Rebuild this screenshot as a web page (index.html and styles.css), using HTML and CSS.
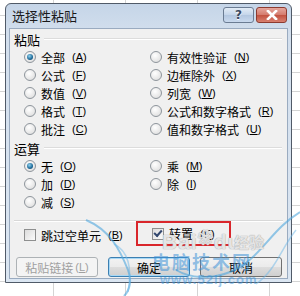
FILE: index.html
```html
<!DOCTYPE html>
<html lang="zh-CN">
<head>
    <meta charset="UTF-8">
    <title>选择性粘贴</title>
    <link rel="stylesheet" href="styles.css">
</head>
<body>
    <div class="dialog">
        <div class="titlebar">
            <span class="title">选择性粘贴</span>
            <div class="ctrls">
                <span class="cbtn help">?</span>
                <span class="cbtn close">
                    <svg width="12" height="10" viewBox="0 0 12 10"><path d="M2 1 L10 9 M10 1 L2 9" stroke="#fff" stroke-width="2.6" stroke-linecap="square"/></svg>
                </span>
            </div>
        </div>
        <div class="content">
            <div class="head"><span>粘贴</span></div>
            <div class="opts">
                <div class="opt"><i class="radio on"></i>全部<span class="key">(<u>A</u>)</span></div>
                <div class="opt"><i class="radio"></i>有效性验证<span class="key">(<u>N</u>)</span></div>
                <div class="opt"><i class="radio"></i>公式<span class="key">(<u>F</u>)</span></div>
                <div class="opt"><i class="radio"></i>边框除外<span class="key">(<u>X</u>)</span></div>
                <div class="opt"><i class="radio"></i>数值<span class="key">(<u>V</u>)</span></div>
                <div class="opt"><i class="radio"></i>列宽<span class="key">(<u>W</u>)</span></div>
                <div class="opt"><i class="radio"></i>格式<span class="key">(<u>T</u>)</span></div>
                <div class="opt"><i class="radio"></i>公式和数字格式<span class="key">(<u>R</u>)</span></div>
                <div class="opt"><i class="radio"></i>批注<span class="key">(<u>C</u>)</span></div>
                <div class="opt"><i class="radio"></i>值和数字格式<span class="key">(<u>U</u>)</span></div>
            </div>
            <div class="head"><span>运算</span></div>
            <div class="opts">
                <div class="opt"><i class="radio on"></i>无<span class="key">(<u>O</u>)</span></div>
                <div class="opt"><i class="radio"></i>乘<span class="key">(<u>M</u>)</span></div>
                <div class="opt"><i class="radio"></i>加<span class="key">(<u>D</u>)</span></div>
                <div class="opt"><i class="radio"></i>除<span class="key">(<u>I</u>)</span></div>
                <div class="opt"><i class="radio"></i>减<span class="key">(<u>S</u>)</span></div>
            </div>
            <div class="sep"></div>
            <div class="checks">
                <div class="opt chk"><i class="box"></i>跳过空单元<span class="key">(<u>B</u>)</span></div>
                <div class="opt chk mark"><i class="box on"></i>转置<span class="key">(<u>E</u>)</span></div>
            </div>
            <div class="buttons">
                <span class="button disabled">粘贴链接<span class="key">(<u>L</u>)</span></span>
                <span class="button default">确定</span>
                <span class="button">取消</span>
            </div>
        </div>
    </div>

    <div class="watermark">
        <svg class="swoosh" width="220" height="96" viewBox="0 0 220 96">
            <path d="M6 20 C30 30 40 50 48 70 C52 80 50 90 44 96" stroke="#4fa6de" stroke-width="2" fill="none" opacity="0.6"/>
            <path d="M34 44 C50 52 52 70 48 92" stroke="#6db8e8" stroke-width="1.5" fill="none" opacity="0.5"/>
            <path d="M220 12 C190 30 180 60 150 72 C130 80 110 78 96 70" stroke="#4fa6de" stroke-width="2" fill="none" opacity="0.6"/>
            <path d="M216 30 C200 50 196 70 176 84" stroke="#6db8e8" stroke-width="1.5" fill="none" opacity="0.5"/>
        </svg>
        <span class="wm-baidu">Bai<b>&#10048;</b>du</span>
        <span class="wm-jy">经验</span>
        <span class="wm-site">电脑技术网</span>
        <span class="wm-url">www.52lj.com</span>
    </div>
</body>
</html>
```

FILE: styles.css
```css
body {
    margin: 0;
    width: 300px;
    height: 296px;
    overflow: hidden;
    position: relative;
    font-family: "Noto Sans CJK SC", "DejaVu Sans", sans-serif;
    font-size: 12px;
    color: #000;
    background-color: #fff;
    background-image:
        linear-gradient(to right, #d4d4d4 1px, transparent 1px),
        linear-gradient(to bottom, #d4d4d4 1px, transparent 1px);
    background-size: 72px 19px;
    background-position: 53px 15px;
}

.dialog {
    margin: 3px 0 0 5px;
    width: 287px;
    height: 280px;
    box-sizing: border-box;
    border: 1px solid #505a68;
    border-radius: 6px 6px 0 0;
    background: linear-gradient(#c5d5e8, #d3dfed 30px, #dbe6f2);
    padding: 0 3px 3px 3px;
    display: flex;
    flex-direction: column;
}

.titlebar {
    height: 24px;
    flex: none;
    display: flex;
    justify-content: space-between;
    align-items: flex-start;
    padding: 0 1px 0 3px;
}

.title {
    font-size: 13px;
    line-height: 24px;
    color: #1a1a1a;
}

.ctrls {
    display: flex;
    gap: 2px;
    margin-top: 3px;
}

.cbtn {
    width: 31px;
    height: 16px;
    box-sizing: border-box;
    border: 1px solid #6b7c93;
    border-radius: 3px;
    display: flex;
    align-items: center;
    justify-content: center;
}

.help {
    background: linear-gradient(#e3ecf6, #c4d5ea 50%, #b3c7e0 51%, #c9d9ee);
    color: #3b4a60;
    font-family: "DejaVu Sans", sans-serif;
    font-weight: bold;
    font-size: 12px;
    text-shadow: 0 1px 0 #fff;
}

.close {
    background: linear-gradient(#e6a79d, #d47a6c 50%, #c2513f 51%, #d88070);
    border-color: #8c3b30;
}

.content {
    flex: 1;
    background: #f0f0f0;
    border: 1px solid #9aabc0;
    display: flex;
    flex-direction: column;
}

.head {
    height: 18px;
    margin-top: 1px;
    display: flex;
    align-items: center;
    gap: 4px;
    padding: 0 5px 0 4px;
    font-size: 13px;
}

.head::after {
    content: "";
    flex: 1;
    height: 1px;
    background: #dcdcdc;
    border-bottom: 1px solid #fff;
}

.opts {
    display: grid;
    grid-template-columns: 126px 1fr;
    grid-auto-rows: 18px;
    padding-left: 14px;
}

.opt {
    display: flex;
    align-items: center;
    gap: 5px;
    white-space: nowrap;
}

.key {
    font-family: "Liberation Sans", sans-serif;
    font-size: 11px;
    margin-left: 2px;
}

.radio {
    width: 12px;
    height: 12px;
    box-sizing: border-box;
    border-radius: 50%;
    border: 1px solid #8e959c;
    background: radial-gradient(circle at 40% 35%, #fff, #e4e4e4 70%, #d0d0d0);
    display: flex;
    align-items: center;
    justify-content: center;
}

.radio.on::after {
    content: "";
    width: 6px;
    height: 6px;
    border-radius: 50%;
    background: radial-gradient(circle at 40% 35%, #8fd2f0, #1e6a98 60%, #0f3e5f);
}

.sep {
    margin: 9px 4px 0 4px;
    height: 1px;
    background: #d8d8d8;
    border-bottom: 1px solid #fff;
}

.checks {
    display: grid;
    grid-template-columns: 112px 95px;
    height: 26px;
    padding-left: 14px;
}

.box {
    width: 12px;
    height: 12px;
    box-sizing: border-box;
    border: 1px solid #8e8f8f;
    background: linear-gradient(135deg, #dcdcdc, #fbfbfb);
    display: flex;
    align-items: center;
    justify-content: center;
}

.box.on::after {
    content: "";
    width: 6px;
    height: 3px;
    border-left: 2px solid #32476e;
    border-bottom: 2px solid #32476e;
    transform: translateY(-1px) rotate(-48deg);
}

.mark {
    box-sizing: border-box;
    border: 2px solid #d9262b;
    padding-left: 14px;
    height: 25px;
    margin-top: -1px;
}

.buttons {
    display: flex;
    gap: 10px;
    padding-left: 6px;
    margin-top: 9px;
}

.button {
    width: 82px;
    height: 20px;
    box-sizing: border-box;
    border: 1px solid #707070;
    border-radius: 3px;
    background: linear-gradient(#f2f2f2, #ebebeb 50%, #dddddd 51%, #cfcfcf);
    display: flex;
    align-items: center;
    justify-content: center;
}

.button.disabled {
    color: #a0a0a0;
    border-color: #adb2b5;
    background: #f4f4f4;
}

.button.default {
    border-color: #3c7fb1;
    box-shadow: inset 0 0 0 1px #a7d8f6;
}

.watermark {
    position: absolute;
    left: 80px;
    top: 200px;
    width: 220px;
    height: 96px;
    pointer-events: none;
}

.swoosh {
    position: absolute;
    left: 0;
    top: 0;
}

.wm-baidu {
    position: absolute;
    left: 82px;
    top: 26px;
    font-family: "Liberation Sans", sans-serif;
    font-weight: bold;
    font-size: 21px;
    color: rgba(255, 255, 255, 0.7);
    text-shadow: 0 0 1px #aaa, 0 0 1px #aaa;
    letter-spacing: 1px;
}

.wm-baidu b {
    font-size: 15px;
    vertical-align: 6px;
}

.wm-jy {
    position: absolute;
    left: 154px;
    top: 31px;
    font-size: 15px;
    font-weight: bold;
    color: rgba(255, 255, 255, 0.7);
    text-shadow: 0 0 1px #aaa, 0 0 1px #aaa;
}

.wm-site {
    position: absolute;
    left: 72px;
    top: 48px;
    font-size: 18px;
    font-weight: bold;
    color: rgba(60, 145, 215, 0.55);
    letter-spacing: 2px;
}

.wm-url {
    position: absolute;
    left: 80px;
    top: 72px;
    font-family: "Liberation Sans", sans-serif;
    font-weight: bold;
    font-size: 13px;
    color: rgba(60, 150, 220, 0.5);
    letter-spacing: 1px;
}
```
